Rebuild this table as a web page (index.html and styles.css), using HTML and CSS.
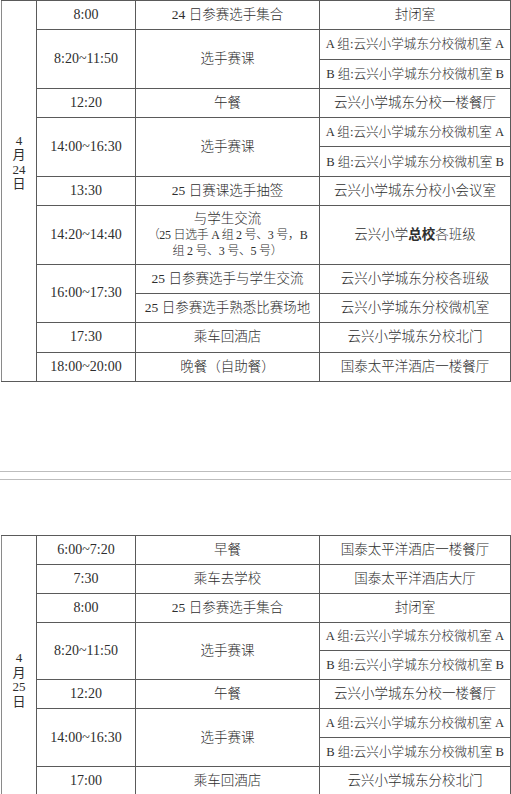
FILE: index.html
```html
<!DOCTYPE html>
<html lang="zh-CN">
<head>
<meta charset="utf-8">
<title>赛程安排</title>
<link rel="stylesheet" href="styles.css">
</head>
<body>
<table class="sched t1">
  <colgroup><col class="c1"><col class="c2"><col class="c3"><col class="c4"></colgroup>
  <tr>
    <td class="date" rowspan="12">4<br>月<br>24<br>日</td>
    <td class="time">8:00</td><td>24 日参赛选手集合</td><td>封闭室</td>
  </tr>
  <tr><td class="time" rowspan="2">8:20~11:50</td><td rowspan="2">选手赛课</td><td class="room">A 组:云兴小学城东分校微机室 A</td></tr>
  <tr><td class="room">B 组:云兴小学城东分校微机室 B</td></tr>
  <tr><td class="time">12:20</td><td>午餐</td><td>云兴小学城东分校一楼餐厅</td></tr>
  <tr><td class="time" rowspan="2">14:00~16:30</td><td rowspan="2">选手赛课</td><td class="room">A 组:云兴小学城东分校微机室 A</td></tr>
  <tr><td class="room">B 组:云兴小学城东分校微机室 B</td></tr>
  <tr><td class="time">13:30</td><td>25 日赛课选手抽签</td><td>云兴小学城东分校小会议室</td></tr>
  <tr class="tall"><td class="time">14:20~14:40</td><td class="multi">与学生交流<br><span class="small">（25 日选手 A 组 2 号、3 号，B<br>组 2 号、3 号、5 号）</span></td><td>云兴小学<b>总校</b>各班级</td></tr>
  <tr><td class="time" rowspan="2">16:00~17:30</td><td>25 日参赛选手与学生交流</td><td>云兴小学城东分校各班级</td></tr>
  <tr><td>25 日参赛选手熟悉比赛场地</td><td>云兴小学城东分校微机室</td></tr>
  <tr><td class="time">17:30</td><td>乘车回酒店</td><td>云兴小学城东分校北门</td></tr>
  <tr><td class="time">18:00~20:00</td><td>晚餐（自助餐）</td><td>国泰太平洋酒店一楼餐厅</td></tr>
</table>

<div class="sep"></div>

<table class="sched t2">
  <colgroup><col class="c1"><col class="c2"><col class="c3"><col class="c4"></colgroup>
  <tr>
    <td class="date" rowspan="9">4<br>月<br>25<br>日</td>
    <td class="time">6:00~7:20</td><td>早餐</td><td>国泰太平洋酒店一楼餐厅</td>
  </tr>
  <tr><td class="time">7:30</td><td>乘车去学校</td><td>国泰太平洋酒店大厅</td></tr>
  <tr><td class="time">8:00</td><td>25 日参赛选手集合</td><td>封闭室</td></tr>
  <tr><td class="time" rowspan="2">8:20~11:50</td><td rowspan="2">选手赛课</td><td class="room">A 组:云兴小学城东分校微机室 A</td></tr>
  <tr><td class="room">B 组:云兴小学城东分校微机室 B</td></tr>
  <tr><td class="time">12:20</td><td>午餐</td><td>云兴小学城东分校一楼餐厅</td></tr>
  <tr><td class="time" rowspan="2">14:00~16:30</td><td rowspan="2">选手赛课</td><td class="room">A 组:云兴小学城东分校微机室 A</td></tr>
  <tr><td class="room">B 组:云兴小学城东分校微机室 B</td></tr>
  <tr><td class="time">17:00</td><td>乘车回酒店</td><td>云兴小学城东分校北门</td></tr>
</table>
</body>
</html>
```
FILE: styles.css
```css
html, body {
  margin: 0;
  padding: 0;
  background: #fff;
  overflow: hidden;
}

body {
  width: 511px;
  height: 794px;
  font-family: "Liberation Serif", "Noto Sans CJK SC", serif;
  color: #2e2e2e;
}

.sched {
  border-collapse: collapse;
  table-layout: fixed;
  width: 509px;
  margin-left: 1px;
}

.c1 { width: 35px; }
.c2 { width: 99px; }
.c3 { width: 184px; }
.c4 { width: 191px; }

.sched td {
  border: 1px solid #5a5a5a;
  padding: 0;
  text-align: center;
  vertical-align: middle;
  font-size: 13.5px;
  font-weight: 300;
  line-height: 16px;
  white-space: nowrap;
  overflow: hidden;
}

.t1 td { height: 28.3px; }
.t1 tr.tall td { height: 57.6px; }
.t2 td { height: 27.9px; }

.sched td.time {
  font-size: 14px;
  font-weight: 400;
}

.sched td.room {
  font-size: 12.6px;
}

.sched td.date {
  border-left-color: #8a8a8a;
  font-size: 13px;
  font-weight: 400;
  line-height: 14.5px;
}

.t1 td.date {
  padding-bottom: 56px;
}

.t2 td.date {
  padding-top: 30px;
}

.sched td.multi {
  line-height: 16px;
}

.small {
  font-size: 12px;
  letter-spacing: -0.3px;
}

.sched b {
  font-weight: 700;
}

.sep {
  margin-top: 89px;
  height: 7px;
  border-top: 1px solid #bdbdbd;
  border-bottom: 1px solid #bdbdbd;
  margin-bottom: 55px;
}
```
